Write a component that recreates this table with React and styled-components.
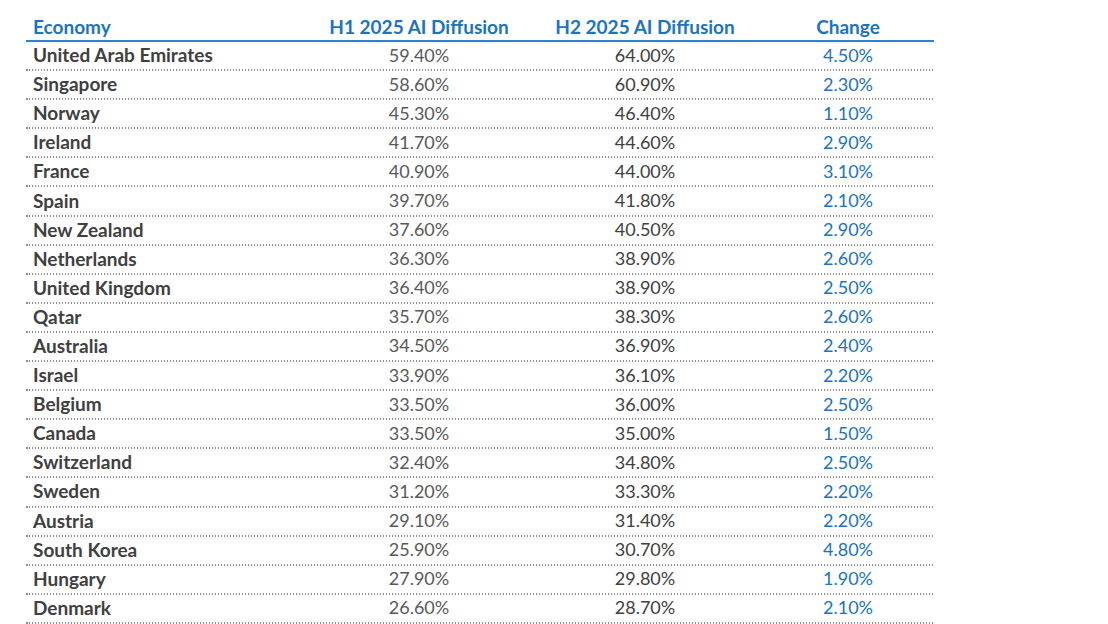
import styled, { createGlobalStyle } from "styled-components"

const rows = [
    ["United Arab Emirates", "59.40%", "64.00%", "4.50%"],
    ["Singapore", "58.60%", "60.90%", "2.30%"],
    ["Norway", "45.30%", "46.40%", "1.10%"],
    ["Ireland", "41.70%", "44.60%", "2.90%"],
    ["France", "40.90%", "44.00%", "3.10%"],
    ["Spain", "39.70%", "41.80%", "2.10%"],
    ["New Zealand", "37.60%", "40.50%", "2.90%"],
    ["Netherlands", "36.30%", "38.90%", "2.60%"],
    ["United Kingdom", "36.40%", "38.90%", "2.50%"],
    ["Qatar", "35.70%", "38.30%", "2.60%"],
    ["Australia", "34.50%", "36.90%", "2.40%"],
    ["Israel", "33.90%", "36.10%", "2.20%"],
    ["Belgium", "33.50%", "36.00%", "2.50%"],
    ["Canada", "33.50%", "35.00%", "1.50%"],
    ["Switzerland", "32.40%", "34.80%", "2.50%"],
    ["Sweden", "31.20%", "33.30%", "2.20%"],
    ["Austria", "29.10%", "31.40%", "2.20%"],
    ["South Korea", "25.90%", "30.70%", "4.80%"],
    ["Hungary", "27.90%", "29.80%", "1.90%"],
    ["Denmark", "26.60%", "28.70%", "2.10%"],
]

const App = () => {
    return (
        <>
            <GlobalStyle />
            <Table>
                <HeaderRow>
                    <HeadCell>Economy</HeadCell>
                    <HeadCell center>H1 2025 AI Diffusion</HeadCell>
                    <HeadCell center>H2 2025 AI Diffusion</HeadCell>
                    <HeadCell center shift>Change</HeadCell>
                </HeaderRow>
                {rows.map(([name, h1, h2, change]) => (
                    <Row key={name}>
                        <NameCell>{name}</NameCell>
                        <ValueCell tone="#595959">{h1}</ValueCell>
                        <ValueCell tone="#404040">{h2}</ValueCell>
                        <ValueCell tone="#1a73c4" shift>
                            {change}
                        </ValueCell>
                    </Row>
                ))}
            </Table>
        </>
    )
}

export default App

const GlobalStyle = createGlobalStyle`
    body {
        margin: 0;
        background: #fff;
        font-family: Lato, "Open Sans", sans-serif;
    }
`

const Table = styled.div`
    width: 908px;
    margin: 13px 0 0 26px;
`

const Grid = styled.div`
    display: grid;
    grid-template-columns: 280px 226px 226px 176px;
    align-items: center;
`

const HeaderRow = styled(Grid)`
    height: 27px;
    border-bottom: 2px solid #2a84d2;
`

const HeadCell = styled.div`
    color: #1a73c4;
    font-weight: 700;
    font-size: 19px;
    line-height: 1;
    text-align: ${(p) => (p.center ? "center" : "left")};
    padding-left: ${(p) => (p.shift ? "4px" : p.center ? "0" : "7px")};
`

const Row = styled(Grid)`
    height: 29.1px;
    padding-bottom: 4px;
    box-sizing: border-box;
    background-image: repeating-linear-gradient(
        to right,
        #8c8c8c 0 1.5px,
        transparent 1.5px 3px
    );
    background-size: 100% 2px;
    background-position: left bottom;
    background-repeat: no-repeat;
`

const NameCell = styled.div`
    color: #404040;
    font-weight: 700;
    font-size: 19px;
    line-height: 1;
    padding-left: 7px;
`

const ValueCell = styled.div`
    color: ${(p) => p.tone};
    font-size: 18px;
    line-height: 1;
    text-align: center;
    padding-left: ${(p) => (p.shift ? "4px" : "0")};
`
